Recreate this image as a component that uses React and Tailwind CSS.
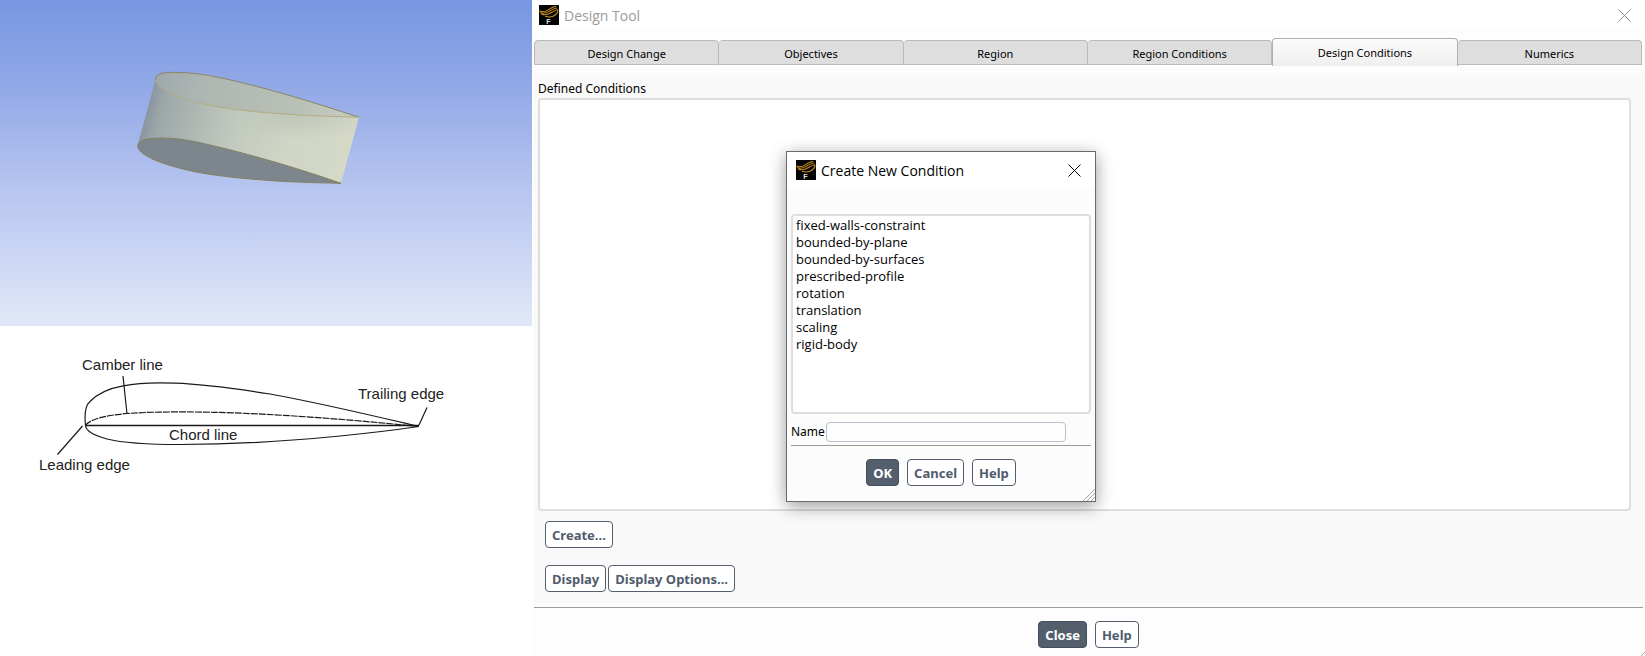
import { useState } from 'react';

const tabs = [
  'Design Change',
  'Objectives',
  'Region',
  'Region Conditions',
  'Design Conditions',
  'Numerics',
];

const conditionTypes = [
  'fixed-walls-constraint',
  'bounded-by-plane',
  'bounded-by-surfaces',
  'prescribed-profile',
  'rotation',
  'translation',
  'scaling',
  'rigid-body',
];

const AppIcon = () => (
  <svg className="h-5 w-5 shrink-0 overflow-visible" viewBox="0 0 20 20" aria-hidden="true">
    <rect width="20" height="20" fill="#050505" />
    <g fill="none" stroke="#c98f1f" strokeWidth="1.100" strokeLinecap="round">
      <path d="M0.800 6C4 7.600 7 6.600 10 4.400S15 1.500 16.600 1.500" />
      <path d="M1.500 7.700C5 9 8 7.800 11 5.900S16 3.200 17.600 3" />
      <path d="M2.800 9.300C6 10.500 9.500 9.300 12.500 7.500S17.500 5 18.700 4.800" />
      <path d="M6.500 11.300C10 12.600 14 11.700 16.500 9.700C18.300 8.300 19 7.400 19 5.600" />
    </g>
    <text
      x="9.500"
      y="19"
      textAnchor="middle"
      fill="#e0e0e0"
      className="font-['Liberation_Sans'] text-[7px] font-bold"
    >
      F
    </text>
  </svg>
);

const CloseButton = ({ className, label }) => (
  <button type="button" aria-label={label} className={className}>
    <svg className="h-[13px] w-[13px]" viewBox="0 0 13 13" aria-hidden="true">
      <path d="M0.500 0.500L12.500 12.500M12.500 0.500L0.500 12.500" fill="none" stroke="currentColor" />
    </svg>
  </button>
);

const Button = ({ children, primary = false }) => (
  <button
    type="button"
    className={
      primary
        ? 'h-[27px] rounded border border-[#434e5c] bg-[#535f6d] px-1.5 pt-0.5 text-[13px] leading-[23px] font-bold text-white'
        : 'h-[27px] rounded border border-[#535f6d] bg-white px-1.5 pt-0.5 text-[13px] leading-[23px] font-bold text-[#505c6b]'
    }
  >
    {children}
  </button>
);

const sidePath =
  'M155.700 80C158 90 178 98 197 102.700C240 112.500 295 115.500 359 117.300L341 183.300C303 170 280 163 253 155.700C225 148 185 136.500 156 138.500C147 139 140 141 138 145Z';

const WingModel = () => (
  <svg className="block w-full" viewBox="0 0 532 326" role="img" aria-label="Airfoil model">
    <defs>
      <linearGradient id="sky" x1="0" y1="0" x2="0" y2="1">
        <stop offset="0" stopColor="#7795e1" />
        <stop offset="0.300" stopColor="#96ace8" />
        <stop offset="0.600" stopColor="#b9c7f0" />
        <stop offset="1" stopColor="#e1e8f8" />
      </linearGradient>
      <linearGradient id="side" gradientUnits="userSpaceOnUse" x1="145" y1="110" x2="350" y2="160">
        <stop offset="0" stopColor="#87929d" />
        <stop offset="0.070" stopColor="#9ca6a9" />
        <stop offset="0.220" stopColor="#adb5b1" />
        <stop offset="0.450" stopColor="#c3cbc0" />
        <stop offset="0.700" stopColor="#d0d5c5" />
        <stop offset="1" stopColor="#d5d9c6" />
      </linearGradient>
      <linearGradient id="inside" gradientUnits="userSpaceOnUse" x1="156" y1="80" x2="359" y2="117">
        <stop offset="0" stopColor="#9ea8ab" />
        <stop offset="0.200" stopColor="#adb5b2" />
        <stop offset="0.700" stopColor="#b9c0b6" />
        <stop offset="1" stopColor="#c8cebf" />
      </linearGradient>
      <radialGradient
        id="shade"
        gradientUnits="userSpaceOnUse"
        cx="0"
        cy="0"
        r="1"
        gradientTransform="translate(300 114) scale(75 26)"
      >
        <stop offset="0" stopColor="#b4bcb0" stopOpacity="0.600" />
        <stop offset="1" stopColor="#b4bcb0" stopOpacity="0" />
      </radialGradient>
    </defs>
    <rect width="532" height="326" fill="url(#sky)" />
    <path d={sidePath} fill="url(#side)" />
    <path d={sidePath} fill="url(#shade)" />
    <path
      d="M155.700 80C155 74 162 72.300 173 72.300C190 72.300 205 74.500 220 77.700C260 86 310 101 359 117.300C295 115.500 240 112.500 197 102.700C178 98 158 90 155.700 80Z"
      fill="url(#inside)"
    />
    <path
      d="M137.700 146C138 140 148 138 163 138C180 138.300 195 141.500 210 145C255 155.500 300 169 341 183.300C310 182.700 285 181.800 263 180C215 176.500 190 171.500 173 166.300C150 160 138 152 137.700 146Z"
      fill="#7d858d"
      stroke="#85815c"
    />
    <path
      d="M155.700 80C155 74 162 72.300 173 72.300C190 72.300 205 74.500 220 77.700C260 86 310 101 359 117.300"
      fill="none"
      stroke="#8a8666"
    />
    <path
      d="M155.700 80C158 90 178 98 197 102.700C240 112.500 295 115.500 359 117.300"
      fill="none"
      stroke="#b5ad7c"
    />
    <path d="M155.700 80L138.500 143" fill="none" stroke="#8b97a8" strokeOpacity="0.600" />
  </svg>
);

const AirfoilDiagram = () => (
  <svg className="block w-full" viewBox="0 326 532 170" role="img" aria-label="Airfoil geometry">
    <g fill="none" stroke="#1a1a1a" strokeWidth="1.200">
      <path d="M85.500 425.500C84 412 86 405 90 401.500C97 394 108 388.500 123 385.800C140 382.500 160 382.500 175 383.200C200 384 235 388.500 270 394C320 403 370 415 419 426.500" />
      <path d="M85.500 425.500C86 431 92 435 107 439C125 443.500 150 444.500 180 444.500C235 444.500 300 440 340 436C370 433 395 430 419 426.500" />
      <path d="M85.500 425.500H419" strokeWidth="1.400" />
      <path
        d="M85.500 425.500C90 419 105 415.500 127 413.500C155 411.500 190 411.800 213 412.300C270 413.500 345 419 419 426.500"
        strokeDasharray="7 1"
      />
      <path d="M123 376L127 414M82.500 426L57.500 454.500M427 407.500L419 425" />
    </g>
    <g fill="#222" className="font-['Liberation_Sans'] text-[15px]">
      <text x="82" y="370">Camber line</text>
      <text x="358" y="399">Trailing edge</text>
      <text x="169" y="440">Chord line</text>
      <text x="39" y="470">Leading edge</text>
    </g>
  </svg>
);

const TabBar = ({ active, onSelect }) => (
  <div role="tablist" className="mr-[3px] ml-0.5 flex h-7 items-end">
    {tabs.map((tab) => (
      <button
        key={tab}
        type="button"
        role="tab"
        aria-selected={tab === active}
        onClick={() => onSelect(tab)}
        className={
          tab === active
            ? 'h-7 flex-1 rounded-t border border-b-0 border-[#b0b0b0] bg-linear-to-b from-[#fbfbfb] to-[#efefef] pt-0.5 text-[11px] text-black'
            : 'mb-px h-[25px] flex-1 rounded-t-sm border border-l-0 border-[#bababa] bg-[#dedede] pt-1 text-[11px] text-black first:border-l'
        }
      >
        {tab}
      </button>
    ))}
  </div>
);

const CreateConditionDialog = () => {
  const [selected, setSelected] = useState(null);
  const [name, setName] = useState('');

  return (
    <div
      role="dialog"
      aria-labelledby="dialog-title"
      className="absolute top-[151px] left-[254px] w-[310px] border border-[#6a6a6a] bg-[#fcfcfc] shadow-[0_4px_16px_rgba(0,0,0,0.4)]"
    >
      <div className="flex h-9 items-center gap-[5px] bg-white pr-3.5 pl-[9px]">
        <AppIcon />
        <h2 id="dialog-title" className="flex-1 pt-px font-['Open_Sans',sans-serif] text-sm text-black">
          Create New Condition
        </h2>
        <CloseButton label="Close dialog" className="text-black" />
      </div>
      <div className="px-1 pt-[26px] pb-[15px]">
        <ul
          role="listbox"
          aria-label="Condition types"
          className="h-[200px] rounded border-2 border-[#dedede] bg-white px-[3px] pt-px font-['Open_Sans',sans-serif]"
        >
          {conditionTypes.map((type) => (
            <li
              key={type}
              role="option"
              aria-selected={type === selected}
              onClick={() => setSelected(type)}
              className="text-[13px] leading-[17px]"
            >
              {type}
            </li>
          ))}
        </ul>
        <div className="mt-2 flex items-center gap-px border-b border-[#9a9a9a] pr-[25px] pb-[3px]">
          <label htmlFor="condition-name" className="text-xs">
            Name
          </label>
          <input
            id="condition-name"
            type="text"
            value={name}
            onChange={(event) => setName(event.target.value)}
            className="h-5 min-w-0 flex-1 rounded border border-[#b9c2cd] bg-[#fdfdfd] px-1 text-xs"
          />
        </div>
        <div className="mt-[13px] flex justify-center gap-2">
          <Button primary>OK</Button>
          <Button>Cancel</Button>
          <Button>Help</Button>
        </div>
      </div>
      <svg className="absolute right-0 bottom-0 h-3 w-3" viewBox="0 0 12 12" aria-hidden="true">
        <path d="M0 12L12 0M4 12L12 4M8 12L12 8" fill="none" stroke="#a5a5a5" />
      </svg>
    </div>
  );
};

const DesignTool = () => {
  const [activeTab, setActiveTab] = useState('Design Conditions');

  return (
    <section className="relative flex min-h-screen flex-col bg-[#fdfdfd]">
      <header className="flex h-[30px] items-center gap-[5px] bg-white pr-3.5 pl-[7px]">
        <AppIcon />
        <h1 className="flex-1 pt-px font-['Open_Sans',sans-serif] text-sm text-[#9a9a9a]">Design Tool</h1>
        <CloseButton label="Close window" className="text-[#8a8a8a]" />
      </header>
      <div className="h-2" />
      <TabBar active={activeTab} onSelect={setActiveTab} />
      <div className="mx-0.5 mt-[7px] flex flex-1 flex-col bg-[#f9f9f9] pr-3 pb-[11px] pl-1">
        <h3 id="defined-conditions" className="pt-[7px] text-xs leading-[18px]">
          Defined Conditions
        </h3>
        <ul
          role="listbox"
          aria-labelledby="defined-conditions"
          className="flex-1 rounded border-2 border-[#dedede] bg-white"
        />
        <div className="mt-2.5 flex pl-[7px]">
          <Button>Create...</Button>
        </div>
        <div className="mt-[17px] flex gap-0.5 pl-[7px]">
          <Button>Display</Button>
          <Button>Display Options...</Button>
        </div>
      </div>
      <footer className="mx-0.5 mt-1 flex justify-center gap-2 border-t border-[#9a9a9a] pt-[13px] pb-2">
        <Button primary>Close</Button>
        <Button>Help</Button>
      </footer>
      <svg className="absolute right-0 bottom-0 h-1 w-1" viewBox="0 0 4 4" aria-hidden="true">
        <path d="M0 4L4 0" fill="none" stroke="#a5a5a5" />
      </svg>
      <CreateConditionDialog />
    </section>
  );
};

const App = () => (
  <main className="grid min-h-screen grid-cols-[532fr_1113fr] bg-white font-['Noto_Sans',sans-serif] text-black">
    <div>
      <WingModel />
      <AirfoilDiagram />
    </div>
    <DesignTool />
  </main>
);

export default App;
